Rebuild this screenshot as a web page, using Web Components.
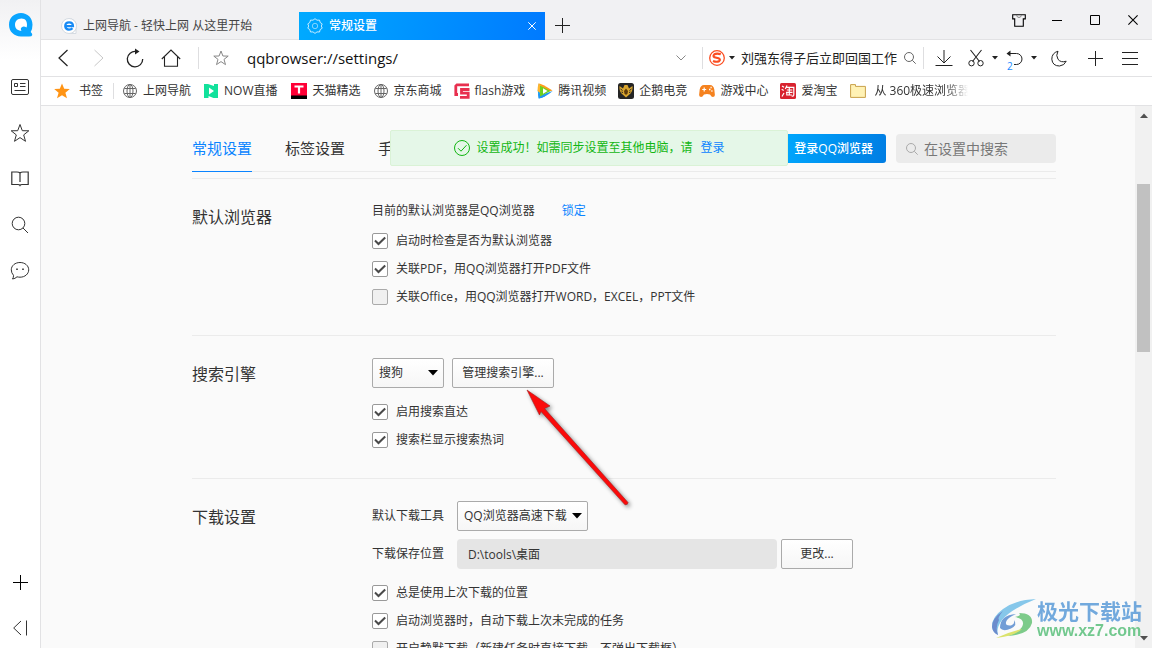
<!DOCTYPE html>
<html lang="zh-CN">
<head>
<meta charset="utf-8">
<title>常规设置</title>
<style>
html, body { margin: 0; height: 100%; }
body { font: 12px/18px "Open Sans", "Noto Sans CJK SC", sans-serif; color: #333; overflow: hidden; background: #fff; }
</style>
</head>
<body>
<browser-window></browser-window>
<script>
const base = `
*, *::before, *::after { box-sizing: border-box; }
button, input, select { font: inherit; color: inherit; margin: 0; padding: 0; border: 0; background: none; outline: 0; }
button { display: flex; align-items: center; justify-content: center; cursor: pointer; white-space: nowrap; }
a { color: inherit; text-decoration: none; white-space: nowrap; }
h1, h2, p { margin: 0; font-weight: 400; }
`;
function define(name, css, html, ready) {
  customElements.define(name, class extends HTMLElement {
    constructor() {
      super();
      this.attachShadow({ mode: "open" });
    }
    connectedCallback() {
      if (this.shadowRoot.firstChild) return;
      const t = document.createElement("template");
      t.innerHTML = `<style>${base}${css}</style>${html}`;
      this.shadowRoot.append(t.content.cloneNode(true));
      if (ready) ready(this, this.shadowRoot);
    }
  });
}

/* name: [width, height, markup] */
const icons = {
  logo: [24, 24, '<path d="M12 0C5 0 0 5 0 11.800C0 18.500 5 23.500 12 23.500H20Q23 23.500 23.300 22Q23.400 20.500 21.700 19Q23.500 16 23.500 11.800C23.500 5 18.500 0 12 0Z" fill="#0aa5ff" stroke="none"/><path d="M12.500 5.500C8.500 5.500 6 8.300 6 11.800C6 15.500 8.500 17.800 12.500 17.800Q11 15.500 12.800 14.200Q14.800 12.800 17.500 14.500Q18 13.500 18 11.800C18 8.300 16.500 5.500 12.500 5.500Z" fill="#fff" stroke="none"/>'],
  news: [18, 16, '<rect x=".5" y=".5" width="17" height="15" rx="1.500"/><path d="M3.500 4.500h3v3h-3zM9 4.500h5.500M9 7.500h5.500M3.500 11.500h11"/>'],
  star: [20, 20, '<path d="M10 1.500l2.300 6.200 6.500.1-5.100 4.100 1.800 6.400L10 14.600l-5.500 3.700 1.800-6.400L1.200 7.800l6.500-.1z"/>'],
  starSmall: [16, 16, '<path d="M8 1l1.900 5 5.300.1-4.200 3.300 1.500 5.200L8 11.600l-4.500 3 1.500-5.200L.8 6.100 6.100 6z"/>'],
  book: [18, 16, '<path d="M9 2Q8 1 6 1H.8v12.500H7Q8.500 13.500 9 14.500Q9.500 13.500 11 13.500h6.200V1H12Q10 1 9 2zV11" stroke-width="1.200"/>'],
  search: [18, 18, '<circle cx="7.500" cy="7.500" r="6.300"/><path d="M12 12l5 5"/>'],
  searchSmall: [12, 12, '<circle cx="5" cy="5" r="4.500"/><path d="M8.300 8.300l3.400 3.400"/>'],
  chat: [20, 20, '<path d="M10 1.500c5 0 8.700 3.200 8.700 7.300S15 16.200 10 16.200q-1.500 0-3-.4-1.800 1.900-4.500 2.200 1.200-1.700 1-3.700Q1.300 12 1.300 8.800C1.300 4.700 5 1.500 10 1.500z"/><path d="M6.200 7.500h1.600v1.600H6.200zM12.200 7.500h1.600v1.600h-1.600z" fill="currentColor" stroke="none"/>'],
  plus: [15, 15, '<path d="M7.500 0v15M0 7.500h15"/>'],
  collapse: [15, 16, '<path d="M8 1L.7 8 8 15M13.500.5v15"/>'],
  back: [10, 18, '<path d="M9.500 1L1 9l8.500 8" stroke-width="1.200"/>'],
  forward: [10, 18, '<path d="M.5 1L9 9 .5 17"/>'],
  reload: [18, 20, '<path d="M10 3.500A7.700 7.700 0 1 0 16.700 11" stroke-width="1.300"/><path d="M9 .5l4.500 3L9 6.500z" fill="currentColor" stroke="none"/>'],
  home: [20, 18, '<path d="M.8 10L10 1l9.200 9M3.500 8v9.300h13V8" stroke-width="1.100"/>'],
  chevron: [10, 6, '<path d="M.5.500L5 5 9.500.5"/>'],
  caret: [6, 4, '<path d="M0 0h6L3 3.500z" fill="currentColor" stroke="none"/>'],
  caretBig: [10, 6, '<path d="M0 0h10L5 5.500z" fill="currentColor" stroke="none"/>'],
  caretUp: [8, 5, '<path d="M0 5h8L4 .5z" fill="currentColor" stroke="none"/>'],
  caretDown: [8, 5, '<path d="M0 0h8L4 4.500z" fill="currentColor" stroke="none"/>'],
  sogou: [16, 16, '<circle cx="8" cy="8" r="7.300" stroke="#fb4e22" stroke-width="1.300"/><path d="M11.800 4.300Q8 2.800 5.500 4.200Q3.500 6 5.500 7.300L9.500 8.300Q12 9.500 10 11.200Q7.500 12.400 4 10.900" stroke="#fb4e22" stroke-width="2.200"/>'],
  download: [18, 18, '<path d="M9 1v13M2.500 7.500L9 14l6.500-6.500M.5 16.500h17"/>'],
  scissors: [16, 18, '<path d="M2.500 1l9 11.500M13.500 1l-9 11.500" stroke-width="1.100"/><circle cx="3.500" cy="14.200" r="2.700"/><circle cx="12.500" cy="14.200" r="2.700"/>'],
  undo: [17, 16, '<path d="M1 3.500h9.500a5.200 5.200 0 0 1 0 11H8"/><path d="M4.500.5L.5 3.500l4 3z" fill="currentColor" stroke="none"/>'],
  moon: [16, 17, '<path d="M7 1.200Q.8 3 .8 9.200Q1.500 16 8.500 16Q13.500 15.500 15.200 11.200Q10 13 7 9.300Q4.500 5.500 7 1.200z"/>'],
  menu: [16, 14, '<path d="M0 1.500h16M0 7.500h16M0 13.500h16"/>'],
  shirt: [14, 13, '<path d="M.7.700H13.300v4.200h-2v7.300H2.700V4.900h-2z" stroke-width="1.100"/><path d="M4.500 1Q5 3.500 7 3.500T9.500 1" stroke="#888"/>'],
  minimize: [10, 10, '<path d="M0 5.500h10"/>'],
  maximize: [10, 10, '<path d="M.5.500h9v9h-9z"/>'],
  close: [10, 10, '<path d="M.4.400l9.200 9.200M9.600.4L.4 9.600" stroke-width="1.100"/>'],
  closeTab: [8, 8, '<path d="M.3.300l7.400 7.400M7.700.3L.3 7.700"/>'],
  site: [16, 16, '<path d="M8 .5a7.500 7.500 0 1 1 0 15H15V8" fill="#fff" stroke="#d5dbe2"/><circle cx="8" cy="8" r="7.500" fill="#fff" stroke="#d5dbe2"/><path d="M4 8.200h8Q12 4.300 8.100 4.300T4.200 8.200Q4.500 11.600 8 11.600Q10.300 11.600 11.500 10.200" stroke="#178af5" stroke-width="2.200"/>'],
  gear: [16, 16, '<g stroke-opacity=".75"><path d="M8 .7l2 1.500 2.500-.1.700 2.400 2 1.400L14.300 8l.9 2.200-2 1.400-.7 2.400-2.500-.1-2 1.500-2-1.500-2.500.1-.7-2.400-2-1.400L1.700 8 .8 5.900l2-1.400.7-2.400 2.500.1z"/><circle cx="8" cy="8" r="2.700" stroke-opacity=".5"/></g>'],
  starFull: [16, 16, '<path d="M8 .5l2.200 5.300 5.600.2-4.400 3.700 1.600 5.600L8 12.200l-5 3.100 1.600-5.600L.2 6l5.600-.2z" fill="#ff9415" stroke="none"/>'],
  globe: [16, 16, '<circle cx="8" cy="8" r="6.500"/><ellipse cx="8" cy="8" rx="3" ry="6.500"/><path d="M8 1.500v13M2.300 5.500h11.400M2.300 10.500h11.400"/>'],
  now: [16, 16, '<path d="M1 1h4l6 2V1h4v14h-4.500l-5-2v2H1z" fill="#12e19b" stroke="none"/><path d="M6 4.500l5 3.500-5 3.500z" fill="#fff" stroke="none"/>'],
  tmall: [16, 16, '<path d="M0 0h16v16H0z" fill="#ff0036" stroke="none"/><path d="M0 12.500h16V16H0z" fill="#000" stroke="none"/><path d="M3.500 3.500h9M8 3.500v7" stroke="#fff" stroke-width="2.200"/>'],
  flash: [16, 16, '<path d="M15 1.800H3L1.800 3v8.500H4M15.500 6.500H7.500v3.700h6.700v4.200H6" stroke="#e8304f" stroke-width="2.800"/>'],
  video: [16, 16, '<path d="M1.500.5Q.2 8 1.500 15.500L8 13.500 4 8z" fill="#15a3f5" stroke="none"/><path d="M1.500.5Q4 0 15.500 7.500L10 9 4 5z" fill="#ff9b1c" stroke="none"/><path d="M1.500.5Q.5 4 .5 8l4 3V5l5 2.500z" fill="#ffb52c" stroke="none"/><path d="M15.800 8Q8 14.500 2 15.500L1 11l4 .5z" fill="#2196f3" stroke="none"/><path d="M3 2.500v11L13.500 8z" fill="#70d01f" stroke="none"/><path d="M6 5.200v5.600L10.500 8z" fill="#fff" stroke="none"/>'],
  esport: [16, 16, '<rect width="16" height="16" rx="2.500" fill="#252525" stroke="none"/><path d="M1.500 3l3.500 2.500L6.500 2h3L11 5.500 14.500 3q.5 5-2 7.500L8 14.500l-4.500-4Q1 8 1.500 3z" fill="#d9a52e" stroke="none"/><path d="M8 5.500l2 2.500-.5 2.500L8 12l-1.500-1.500L6 8z" fill="#5d3b0c" stroke="none"/><path d="M2.500 6l2 1.500M13.500 6l-2 1.500M3.500 9l1.500.5M12.500 9l-1.500.5" stroke="#252525"/>'],
  game: [16, 16, '<path d="M5 2h6q3.500 0 4.300 4.500l.6 5.500q-.2 2-2 2Q12.500 14 11 11.500q-3-1-6 0Q3.500 14 2.100 14 .3 14 .1 12l.6-5.500Q1.500 2 5 2z" fill="#f5821f" stroke="none"/><path d="M5.200 4.500v4M3.200 6.500h4" stroke="#fff" stroke-width="1.200"/><path d="M10 6.500h1.500M12.300 8h1.200M11.500 4.500h1.200" stroke="#fff" stroke-width="1.300"/>'],
  taobao: [16, 16, '<rect width="16" height="16" rx="1.500" fill="#d8232f" stroke="none"/><path d="M2 3l2 1.300M1.700 6.300l2 1.200M2 13.500l2-3.500M7 2.500L5.300 6M6.500 4.300h7.300v7.500q0 1.700-2.200 1.200M6.800 7h5.500M6 9.300h6.500M9.300 5v7M6.800 10v2h5" stroke="#fff" stroke-width="1.200"/>'],
  folder: [16, 14, '<path d="M.6.600h4.900v1.800h9.900v11H.6z" fill="#fff2b5" stroke="#c9a24b"/>'],
  tick: [16, 16, '<path d="M3 7.500l3.500 3.500L13.200 4.500" stroke="#4a4a4a" stroke-width="2"/>'],
  okay: [18, 18, '<circle cx="9" cy="9" r="7.500"/><path d="M5 9.200l3 3 5.500-6"/>'],
  arrow: [112, 126, '<path d="M1 1L24 17 18.500 19.500 102 113.500Q102 116 99 115.800L15 22.500 13.500 26z" fill="#fb0a0a" stroke="#a02020" stroke-width=".6"/>'],
  aurora: [46, 40, '<path d="M45 0Q24 1 12 10Q1 18 1 27Q1 33 7 36Q5 29 11 21Q20 10 45 0z" fill="#72bfe8" stroke="none"/><path d="M12 12Q1 19 1 28Q2 34 7 36Q4 29 8 21Q6 19 12 12z" fill="#5479c5" stroke="none"/><path d="M28 14Q42 14 41 24Q38 36 16 37Q27 34 31 28Q35 20 24 18Q31 17 28 14z" fill="#68c377" stroke="none"/><path d="M5 39Q17 33 31 30Q24 37 5 39z" fill="#d6df54" stroke="none"/><path d="M9 29Q9 16 25 15Q16 19 15 23Q14 27 20 26.500Q24 25 23 21Q27 26 20 29.500Q12 33 9 29z" fill="#5b8dd0" stroke="none"/>']
};
define("ui-icon", ":host{display:block;flex:none} svg{display:block;fill:none;stroke:currentColor;overflow:visible}", "", (el, root) => {
  const [w, h, body] = icons[el.getAttribute("name")];
  const t = document.createElement("template");
  t.innerHTML = `<svg width="${w}" height="${h}" viewBox="0 0 ${w} ${h}" aria-hidden="true">${body}</svg>`;
  root.append(t.content);
});

const side = (n, l) => `<button aria-label="${l}"><ui-icon name="${n}"></ui-icon></button>`;
define("side-bar", `
:host { display: flex; flex-direction: column; gap: 6px; width: 41px; flex: none; border-right: 1px solid #e2e2e4; background: linear-gradient(#f1f1f3, #fff 60px); box-sizing: border-box; }
button { width: 40px; height: 40px; color: #333; }
.brand { height: 49px; margin-bottom: 12px; padding-left: 2px; }
.end { margin-top: auto; color: #000; }
`, `<button class="brand" aria-label="QQ"><ui-icon name="logo"></ui-icon></button>
${side("news", "资讯")}${side("star", "收藏")}${side("book", "阅读")}${side("search", "搜索")}${side("chat", "消息")}
<button class="end" aria-label="添加"><ui-icon name="plus"></ui-icon></button>${side("collapse", "收起")}`);

define("browser-tab", `
:host { display: flex; align-items: center; gap: 6px; height: 28px; width: 246px; padding: 0 9px 0 8px; white-space: nowrap; box-sizing: border-box; }
:host([active]) { background: linear-gradient(100deg, #00aaff, #007aff); color: #fff; font-weight: 500; }
span { flex: 1; }
button { width: 8px; height: 16px; }
:host(:not([active])) button { display: none; }
`, `<slot name="icon"></slot><span><slot></slot></span><button aria-label="关闭标签"><ui-icon name="closeTab"></ui-icon></button>`);

define("tab-strip", `
:host { display: flex; align-items: flex-end; height: 40px; flex: none; background: #f1f1f3; border-bottom: 1px solid #e2e2e4; padding-left: 12px; color: #444; box-sizing: border-box; }
browser-tab { margin-bottom: -1px; }
.add { width: 34px; height: 28px; color: #222; }
.win { display: flex; margin-left: auto; align-self: flex-start; color: #000; }
.win button { width: 38px; height: 40px; }
`, `<browser-tab><ui-icon slot="icon" name="site"></ui-icon>上网导航 - 轻快上网 从这里开始</browser-tab>
<browser-tab active><ui-icon slot="icon" name="gear"></ui-icon>常规设置</browser-tab>
<button class="add" aria-label="新标签"><ui-icon name="plus"></ui-icon></button>
<div class="win"><button aria-label="皮肤"><ui-icon name="shirt"></ui-icon></button><button aria-label="最小化"><ui-icon name="minimize"></ui-icon></button><button aria-label="最大化"><ui-icon name="maximize"></ui-icon></button><button aria-label="关闭"><ui-icon name="close"></ui-icon></button></div>`);

define("nav-bar", `
:host { display: flex; align-items: center; height: 37px; flex: none; border-bottom: 1px solid #e2e2e4; padding-left: 4px; color: #222; background: #fff; box-sizing: border-box; }
button { width: 36px; height: 36px; flex: none; }
i { width: 1px; height: 22px; background: #dedee0; flex: none; }
.dim { color: #c8c8c8; } .grey { color: #888; }
.first { margin-left: 9px; }
.star { width: 44px; }
.url { flex: 1; min-width: 0; font-size: 15px; line-height: 22px; color: #111; padding-left: 4px; }
.more { width: 42px; color: #888; }
.engine { width: 32px; gap: 4px; margin-left: 3px; }
.query { width: 156px; font-size: 13px; margin-left: 3px; }
.go { width: 26px; color: #666; }
.pair { width: 39px; gap: 8px; }
.tool { width: 39px; }
.undo { position: relative; }
.undo b { position: absolute; left: 5px; bottom: 4px; font: 10px/12px "Open Sans", sans-serif; color: #1a8cff; }
.menu { width: 34px; margin-right: 5px; }
`, `<button aria-label="后退"><ui-icon name="back"></ui-icon></button><button class="dim" aria-label="前进"><ui-icon name="forward"></ui-icon></button><button aria-label="刷新"><ui-icon name="reload"></ui-icon></button><button aria-label="主页"><ui-icon name="home"></ui-icon></button>
<i class="first"></i><button class="star grey" aria-label="收藏"><ui-icon name="starSmall"></ui-icon></button>
<input class="url" aria-label="地址" value="qqbrowser://settings/"><button class="more" aria-label="展开"><ui-icon name="chevron"></ui-icon></button><i></i>
<button class="engine" aria-label="搜狗"><ui-icon name="sogou"></ui-icon><ui-icon name="caret"></ui-icon></button>
<input class="query" aria-label="搜索" value="刘强东得子后立即回国工作"><button class="go" aria-label="搜索"><ui-icon name="searchSmall"></ui-icon></button><i></i>
<button class="tool" aria-label="下载"><ui-icon name="download"></ui-icon></button>
<button class="pair" aria-label="截图"><ui-icon name="scissors"></ui-icon><ui-icon name="caret"></ui-icon></button>
<button class="pair undo" aria-label="恢复"><ui-icon name="undo"></ui-icon><ui-icon name="caret"></ui-icon><b>2</b></button>
<button aria-label="夜间模式"><ui-icon name="moon"></ui-icon></button><button aria-label="添加"><ui-icon name="plus"></ui-icon></button><button class="menu" aria-label="菜单"><ui-icon name="menu"></ui-icon></button>`);

define("bookmark-bar", `
:host { display: flex; align-items: center; gap: 12px; height: 29px; flex: none; border-bottom: 1px solid #e2e2e4; padding-left: 13px; background: #fff; overflow: hidden; box-sizing: border-box; }
a { display: flex; align-items: center; gap: 5px; flex: none; color: #333; }
a ui-icon { color: #666; }
.own { gap: 9px; margin-right: -2px; }
i { width: 1px; height: 16px; background: #dedee0; margin-right: -4px; }
.now { margin-right: 2px; }
.last { gap: 8px; margin-left: 1px; padding-right: 4px; mask-image: linear-gradient(90deg, #000 96px, transparent 118px); }
`, `<a class="own" href="#"><ui-icon name="starFull"></ui-icon>书签</a><i></i>` +
[["globe", "上网导航"], ["now", "NOW直播"], ["tmall", "天猫精选"], ["globe", "京东商城"], ["flash", "flash游戏"], ["video", "腾讯视频"], ["esport", "企鹅电竞"], ["game", "游戏中心"], ["taobao", "爱淘宝"]]
  .map(([n, t]) => `<a class="${n}" href="#"><ui-icon name="${n}"></ui-icon>${t}</a>`).join("") +
`<a class="last" href="#"><ui-icon name="folder"></ui-icon>从 360极速浏览器</a>`);

define("settings-section", `
:host { display: grid; grid-template-columns: 180px 1fr; border-top: 1px solid #ebebeb; padding: 18px 0 24px; }
h2 { font-size: 16px; line-height: 40px; }
`, `<h2><slot name="title"></slot></h2><div><slot></slot></div>`);

define("check-row", `
:host { display: block; height: 28px; white-space: nowrap; }
label { display: inline-flex; align-items: center; gap: 8px; height: 28px; }
.box { display: grid; width: 16px; height: 16px; }
.box > * { grid-area: 1 / 1; }
input { appearance: none; width: 16px; height: 16px; border: 1px solid #aaa; border-radius: 2px; background: #f0f0f0; }
input:checked { background: #fff; border-color: #999; }
ui-icon { pointer-events: none; visibility: hidden; }
input:checked + ui-icon { visibility: visible; }
`, `<label><span class="box"><input type="checkbox"><ui-icon name="tick"></ui-icon></span><slot></slot></label>`,
(el, root) => { root.querySelector("input").checked = el.hasAttribute("checked"); });

define("push-button", `
:host { display: block; }
button { width: 100%; height: 30px; border: 1px solid #aaa; border-radius: 2px; background: linear-gradient(#fff, #f6f6f6); }
`, `<button><slot></slot></button>`);

define("drop-down", `
:host { display: grid; align-items: center; }
select, ui-icon { grid-area: 1 / 1; }
select { appearance: none; width: 100%; height: 30px; border: 1px solid #aaa; border-radius: 2px; padding: 0 6px; background: linear-gradient(#fff, #f6f6f6); }
ui-icon { justify-self: end; margin-right: 6px; color: #000; pointer-events: none; }
`, `<select><option></option></select><ui-icon name="caretBig"></ui-icon>`,
(el, root) => {
  root.querySelector("option").textContent = el.getAttribute("value");
  root.querySelector("select").setAttribute("aria-label", el.getAttribute("label"));
});

define("status-toast", `
:host { display: flex; align-items: center; justify-content: center; gap: 5px; height: 36px; background: #e5f7e8; border: 1px solid #daf2d6; border-radius: 2px; color: #12b612; white-space: nowrap; box-sizing: border-box; }
a { color: #0a84ff; margin-left: 3px; }
`, `<ui-icon name="okay"></ui-icon><span>设置成功！如需同步设置至其他电脑，请</span><a href="#">登录</a>`);

define("settings-header", `
:host { display: flex; align-items: center; height: 47px; box-shadow: inset 0 -1px #ebebeb; }
nav { display: flex; gap: 33px; font-size: 15px; line-height: 47px; }
.on { color: #0a84ff; box-shadow: inset 0 -1px #0a84ff; }
.login { margin-left: auto; width: 130px; height: 29px; border-radius: 3px; background: linear-gradient(100deg, #00aaff 20px, #007de3); color: #fff; font-weight: 500; justify-content: flex-end; padding-right: 13px; }
label { display: flex; align-items: center; gap: 6px; width: 160px; height: 29px; margin-left: 10px; padding-left: 10px; border-radius: 4px; background: #ebebeb; color: #aaa; }
input { width: 110px; font-size: 14px; line-height: 20px; color: #777; }
input::placeholder { color: #777; opacity: 1; }
`, `<nav><a class="on" href="#">常规设置</a><a href="#">标签设置</a><a href="#">手</a></nav>
<button class="login">登录QQ浏览器</button>
<label><ui-icon name="searchSmall"></ui-icon><input type="search" aria-label="在设置中搜索" placeholder="在设置中搜索"></label>`);

define("settings-page", `
:host { display: block; position: relative; flex: 1; min-width: 0; background: #fafafa; overflow: hidden; padding: 19px 79px 0 151px; box-sizing: border-box; }
settings-header { margin-bottom: 6px; }
status-toast { position: absolute; top: 24px; left: calc(50% - 198px); width: 398px; }
.line { height: 28px; display: flex; align-items: center; gap: 27px; margin-bottom: 2px; }
.line a { color: #0a84ff; }
.controls { display: flex; align-items: center; height: 38px; }
.controls:last-of-type { margin-bottom: 6px; }
.engine { width: 72px; margin-right: 8px; }
.manage { width: 102px; }
.controls label { width: 85px; flex: none; }
.tool { width: 131px; }
.path { flex: 0 1 320px; min-width: 0; height: 30px; padding: 0 11px; border-radius: 4px; background: #e5e5e5; }
.change { width: 72px; margin-left: 4px; }
.pointer { position: absolute; left: 485px; top: 283px; filter: drop-shadow(2px 2px 2px #0007); pointer-events: none; }
`, `<settings-header></settings-header>
<settings-section><span slot="title">默认浏览器</span>
  <p class="line">目前的默认浏览器是QQ浏览器<a href="#">锁定</a></p>
  <check-row checked>启动时检查是否为默认浏览器</check-row>
  <check-row checked>关联PDF，用QQ浏览器打开PDF文件</check-row>
  <check-row>关联Office，用QQ浏览器打开WORD，EXCEL，PPT文件</check-row>
</settings-section>
<settings-section><span slot="title">搜索引擎</span>
  <div class="controls"><drop-down class="engine" label="搜索引擎" value="搜狗"></drop-down><push-button class="manage">管理搜索引擎...</push-button></div>
  <check-row checked>启用搜索直达</check-row>
  <check-row checked>搜索栏显示搜索热词</check-row>
</settings-section>
<settings-section><span slot="title">下载设置</span>
  <div class="controls"><label>默认下载工具</label><drop-down class="tool" label="默认下载工具" value="QQ浏览器高速下载"></drop-down></div>
  <div class="controls"><label for="path">下载保存位置</label><input id="path" class="path" value="D:\\tools\\桌面" readonly><push-button class="change">更改...</push-button></div>
  <check-row checked>总是使用上次下载的位置</check-row>
  <check-row checked>启动浏览器时，自动下载上次未完成的任务</check-row>
  <check-row>开启静默下载（新建任务时直接下载，不弹出下载框）</check-row>
</settings-section>
<status-toast></status-toast>
<ui-icon class="pointer" name="arrow"></ui-icon>`);

define("scroll-rail", `
:host { display: flex; flex-direction: column; align-items: center; width: 17px; flex: none; background: #f1f1f1; padding: 7px 0; color: #505050; box-sizing: border-box; }
.track { flex: 1; width: 13px; display: grid; grid-template-rows: 66fr 168fr 284fr; }
.track span { grid-row: 2; background: #c1c1c1; }
`, `<ui-icon name="caretUp"></ui-icon><div class="track"><span></span></div><ui-icon name="caretDown"></ui-icon>`);

define("site-mark", `
:host { display: flex; align-items: center; white-space: nowrap; opacity: .85; pointer-events: none; }
p { font: 700 21px/24px "Noto Sans CJK SC", sans-serif; color: #5b9bd8; }
small { display: block; font: 700 16px/18px "Liberation Sans", sans-serif; color: #5bc07c; }
`, `<ui-icon name="aurora"></ui-icon><div><p>极光下载站</p><small>www.xz7.com</small></div>`);

define("browser-window", `
:host { display: flex; height: 100vh; position: relative; overflow: hidden; }
.main { flex: 1; min-width: 0; display: flex; flex-direction: column; }
.view { flex: 1; min-height: 0; display: flex; }
site-mark { position: absolute; right: 10px; bottom: 8px; }
`, `<side-bar></side-bar><div class="main"><tab-strip></tab-strip><nav-bar></nav-bar><bookmark-bar></bookmark-bar>
<div class="view"><settings-page></settings-page><scroll-rail></scroll-rail></div></div><site-mark></site-mark>`);
</script>
</body>
</html>
